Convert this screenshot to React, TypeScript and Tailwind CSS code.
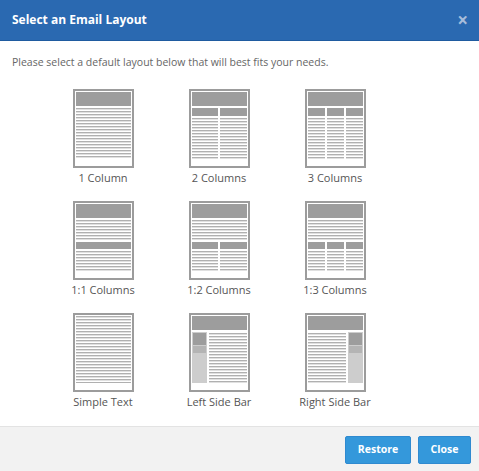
import React from "react";

const DARK = "#9d9d9d";
const LINE = "#b0b0b0";
const LIGHT = "#e0e0e0";

function Stripes({ x, y, w, h }: { x: number; y: number; w: number; h: number }) {
  const rows: React.ReactNode[] = [];
  for (let i = 0; y + i * 3 < y + h; i++) {
    const yy = y + i * 3;
    rows.push(<rect key={`a${i}`} x={x} y={yy} width={w} height={1} fill={LINE} />);
    if (yy + 1 < y + h) rows.push(<rect key={`b${i}`} x={x} y={yy + 1} width={w} height={1} fill={LIGHT} />);
  }
  return <g>{rows}</g>;
}

type Kind = "one" | "two" | "three" | "oneone" | "onetwo" | "onethree" | "simple" | "left" | "right";

function cols(n: number): [number, number][] {
  if (n === 1) return [[3, 55]];
  if (n === 2) return [[3, 26], [31, 27]];
  return [[3, 17], [22, 17], [41, 17]];
}

function LayoutIcon({ kind }: { kind: Kind }) {
  const parts: React.ReactNode[] = [];
  const header = <rect key="h" x={3} y={3} width={55} height={14} fill={DARK} />;
  if (kind === "one" || kind === "two" || kind === "three") {
    parts.push(header);
    const n = kind === "one" ? 1 : kind === "two" ? 2 : 3;
    if (n === 1) {
      parts.push(<Stripes key="s" x={3} y={19} w={55} h={51} />);
    } else {
      cols(n).forEach(([x, w], i) => {
        parts.push(<rect key={`b${i}`} x={x} y={19} width={w} height={8} fill={DARK} />);
        parts.push(<Stripes key={`s${i}`} x={x} y={29} w={w} h={41} />);
      });
    }
  } else if (kind === "oneone" || kind === "onetwo" || kind === "onethree") {
    parts.push(header);
    parts.push(<Stripes key="s0" x={3} y={19} w={55} h={20} />);
    const n = kind === "oneone" ? 1 : kind === "onetwo" ? 2 : 3;
    cols(n).forEach(([x, w], i) => {
      parts.push(<rect key={`b${i}`} x={x} y={41} width={w} height={7} fill={DARK} />);
      parts.push(<Stripes key={`s${i + 1}`} x={x} y={50} w={w} h={20} />);
    });
  } else if (kind === "simple") {
    parts.push(<Stripes key="s" x={3} y={3} w={55} h={67} />);
  } else {
    parts.push(header);
    const sx = kind === "left" ? 3 : 43;
    const tx = kind === "left" ? 20 : 3;
    parts.push(<rect key="sb" x={sx} y={19} width={15} height={51} fill="#cdcdcd" />);
    parts.push(<rect key="sd" x={sx + 1} y={20} width={13} height={12} fill={DARK} />);
    parts.push(<rect key="sm" x={sx + 1} y={33} width={13} height={7} fill="#b4b4b4" />);
    parts.push(<Stripes key="st" x={tx} y={20} w={38} h={50} />);
  }
  return (
    <svg width={61} height={79} viewBox="0 0 61 79" shapeRendering="crispEdges">
      <rect x={1} y={1} width={59} height={77} fill="#ffffff" stroke="#9c9c9c" strokeWidth={2} />
      {parts}
    </svg>
  );
}

const layouts: { kind: Kind; label: string }[] = [
  { kind: "one", label: "1 Column" },
  { kind: "two", label: "2 Columns" },
  { kind: "three", label: "3 Columns" },
  { kind: "oneone", label: "1:1 Columns" },
  { kind: "onetwo", label: "1:2 Columns" },
  { kind: "onethree", label: "1:3 Columns" },
  { kind: "simple", label: "Simple Text" },
  { kind: "left", label: "Left Side Bar" },
  { kind: "right", label: "Right Side Bar" },
];

export default function App() {
  return (
    <div
      className="flex h-[471px] w-[479px] flex-col overflow-hidden bg-white"
      style={{ fontFamily: '"Open Sans", "Liberation Sans", sans-serif' }}
    >
      <div className="flex h-[41px] shrink-0 items-center justify-between border-b border-[#1f5ba0] bg-[#2a69b1] pl-[12px] pr-[11px]">
        <span className="text-[12px] font-bold text-white">Select an Email Layout</span>
        <span className="text-[19px] font-bold leading-none text-[#a7bddb]">×</span>
      </div>
      <div className="flex flex-1 flex-col">
        <p className="mt-[14px] pl-[12px] text-[10.5px] leading-[14px] text-[#666666]">
          Please select a default layout below that will best fits your needs.
        </p>
        <div className="mt-[20px] grid grid-cols-[repeat(3,116px)] gap-y-[16px] pl-[45px]">
          {layouts.map((l) => (
            <div key={l.kind} className="flex flex-col items-center">
              <LayoutIcon kind={l.kind} />
              <span className="mt-[2px] text-[11px] leading-[15px] text-[#555555]">{l.label}</span>
            </div>
          ))}
        </div>
      </div>
      <div className="flex h-[45px] shrink-0 items-start justify-end gap-[7px] border-t border-[#e3e3e3] bg-[#f2f2f2] pr-[8px] pt-[9px]">
        <button className="h-[28px] w-[66px] rounded-[2px] border border-[#2f8ad0] bg-[#3498db] text-[10.5px] font-bold text-white">
          Restore
        </button>
        <button className="h-[28px] w-[53px] rounded-[2px] border border-[#2f8ad0] bg-[#3498db] text-[10.5px] font-bold text-white">
          Close
        </button>
      </div>
    </div>
  );
}
